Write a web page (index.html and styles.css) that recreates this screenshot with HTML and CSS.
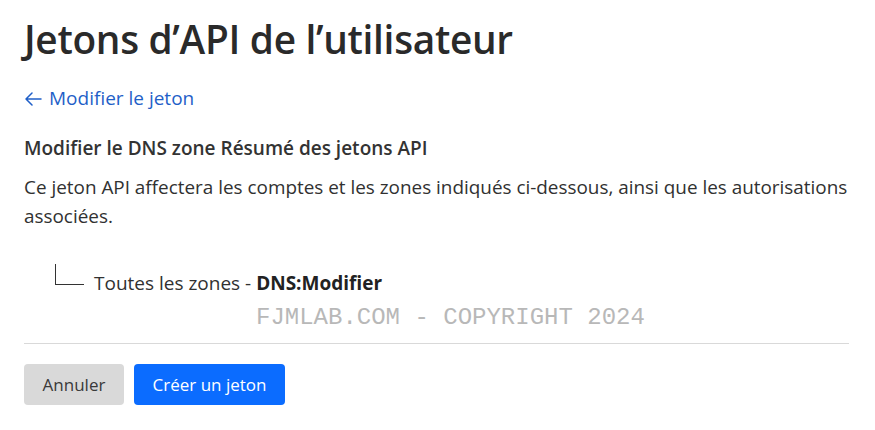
FILE: index.html
```html
<!DOCTYPE html>
<html lang="fr">
<head>
<meta charset="utf-8">
<link rel="stylesheet" href="styles.css">
</head>
<body>
<main class="page">
  <h1 class="title">Jetons d’API de l’utilisateur</h1>
  <a class="back" href="#"><svg class="arrow" width="18" height="14" viewBox="0 0 18 14" aria-hidden="true"><path d="M17 7H2M8 1L2 7l6 6" fill="none" stroke="currentColor" stroke-width="1.5" stroke-linecap="round" stroke-linejoin="round"/></svg> Modifier le jeton</a>
  <h2 class="summary">Modifier le DNS zone Résumé des jetons API</h2>
  <p class="desc">Ce jeton API affectera les comptes et les zones indiqués ci-dessous, ainsi que les autorisations associées.</p>
  <div class="tree">
    <span class="branch"></span>
    <span class="leaf">Toutes les zones - <b>DNS:Modifier</b></span>
  </div>
  <div class="watermark">FJMLAB.COM - COPYRIGHT 2024</div>
  <hr class="rule">
  <div class="actions">
    <button class="btn btn-cancel">Annuler</button>
    <button class="btn btn-primary">Créer un jeton</button>
  </div>
</main>
</body>
</html>
```
FILE: styles.css
```css
* { box-sizing: border-box; }
html, body { margin: 0; background: #fff; }
body {
  font-family: "Open Sans", "Noto Sans", sans-serif;
  color: #313131;
}
.page {
  width: 875px;
  padding: 13px 26px 0 24px;
}
.title {
  margin: 0;
  font-size: 38.8px;
  font-weight: 600;
  line-height: 52px;
  color: #2a2a2a;
  letter-spacing: -0.3px;
}
.back {
  display: inline-flex;
  align-items: center;
  gap: 7px;
  margin-top: 20px;
  font-size: 19px;
  line-height: 26px;
  color: #1f5fc8;
  text-decoration: none;
}
.arrow { margin-top: 2px; }
.summary {
  margin: 24px 0 0;
  font-size: 19px;
  font-weight: 600;
  line-height: 26px;
  color: #333;
}
.desc {
  margin: 12px 0 0;
  font-size: 18.9px;
  line-height: 29px;
}
.tree {
  display: flex;
  align-items: flex-end;
  margin-top: 37px;
  padding-left: 31px;
  height: 28px;
}
.branch {
  width: 29px;
  height: 21px;
  border-left: 1px solid #333;
  border-bottom: 1px solid #333;
  margin-bottom: 11px;
}
.leaf {
  margin-left: 10px;
  font-size: 19px;
  line-height: 26px;
}
.leaf b { font-weight: 700; color: #222; }
.watermark {
  margin-top: 8px;
  padding-left: 232px;
  font-family: "Liberation Mono", monospace;
  font-weight: 400;
  font-size: 24px;
  line-height: 28px;
  color: #b8b8b8;
}
.rule {
  margin: 11px 0 0;
  border: 0;
  border-top: 1px solid #d9d9d9;
}
.actions {
  display: flex;
  gap: 10px;
  margin-top: 20px;
}
.btn {
  height: 41px;
  border: 0;
  border-radius: 4px;
  font-family: inherit;
  font-size: 17px;
  padding: 0;
  white-space: nowrap;
}
.btn-cancel { background: #d9d9d9; color: #3a3a3a; width: 100px; }
.btn-primary { background: #0b6cff; color: #fff; width: 151px; }
```
